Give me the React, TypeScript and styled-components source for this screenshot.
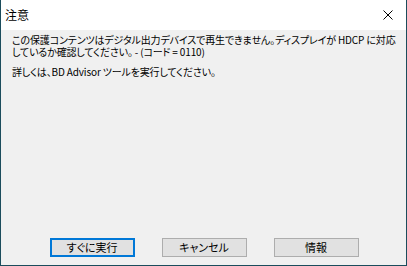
import React from "react";
import styled, { createGlobalStyle } from "styled-components";

const Global = createGlobalStyle`
  html, body { margin: 0; padding: 0; background: #f0f0f0; }
  body { font-family: "Noto Sans CJK JP", "Noto Sans", sans-serif; }
`;

const Window = styled.div`
  box-sizing: border-box;
  width: 407px;
  height: 266px;
  border: 1px solid #1b4c5c;
  border-top: none;
  display: flex;
  flex-direction: column;
  background: #f0f0f0;
`;

const TitleBar = styled.div`
  height: 30px;
  background: #ffffff;
  display: flex;
  align-items: center;
  justify-content: space-between;
  padding: 0 13px 0 4px;
  flex: none;
`;

const Title = styled.span`
  font-size: 12px;
  color: #000;
  line-height: 1;
`;

const CloseIcon = styled.svg`
  width: 10px;
  height: 10px;
  display: block;
`;

const Body = styled.div`
  flex: 1;
  padding: 4px 10px 0 11px;
  display: flex;
  flex-direction: column;
`;

const Para = styled.p<{ $gap?: number }>`
  margin: 0 0 ${(p) => p.$gap ?? 0}px 0;
  font-size: 10px;
  line-height: 12px;
  letter-spacing: -0.15px;
  color: #000;
  font-feature-settings: "palt";
  white-space: nowrap;
`;

const ButtonRow = styled.div`
  display: flex;
  justify-content: center;
  gap: 27px;
  padding-bottom: 8px;
  margin-top: auto;
`;

const Button = styled.button<{ $default?: boolean }>`
  box-sizing: border-box;
  width: 85px;
  height: 19px;
  padding: 0;
  background: #e1e1e1;
  border: ${(p) => (p.$default ? "2px solid #0078d7" : "1px solid #adadad")};
  font-family: "Noto Sans CJK JP", sans-serif;
  font-size: 11px;
  line-height: 1;
  color: #000;
  font-feature-settings: "palt";
  display: flex;
  align-items: center;
  justify-content: center;
`;

export default function App() {
  return (
    <>
      <Global />
      <Window>
        <TitleBar>
          <Title>注意</Title>
          <CloseIcon viewBox="0 0 10 10">
            <path d="M0.5 0.5 L9.5 9.5 M9.5 0.5 L0.5 9.5" stroke="#000" strokeWidth="1" />
          </CloseIcon>
        </TitleBar>
        <Body>
          <Para $gap={8}>
            この保護コンテンツはデジタル出力デバイスで再生できません。ディスプレイが HDCP に対応
            <br />
            しているか確認してください。 - (コード = 0110)
          </Para>
          <Para>詳しくは、BD Advisor ツールを実行してください。</Para>
          <ButtonRow>
            <Button $default>すぐに実行</Button>
            <Button>キャンセル</Button>
            <Button>情報</Button>
          </ButtonRow>
        </Body>
      </Window>
    </>
  );
}
